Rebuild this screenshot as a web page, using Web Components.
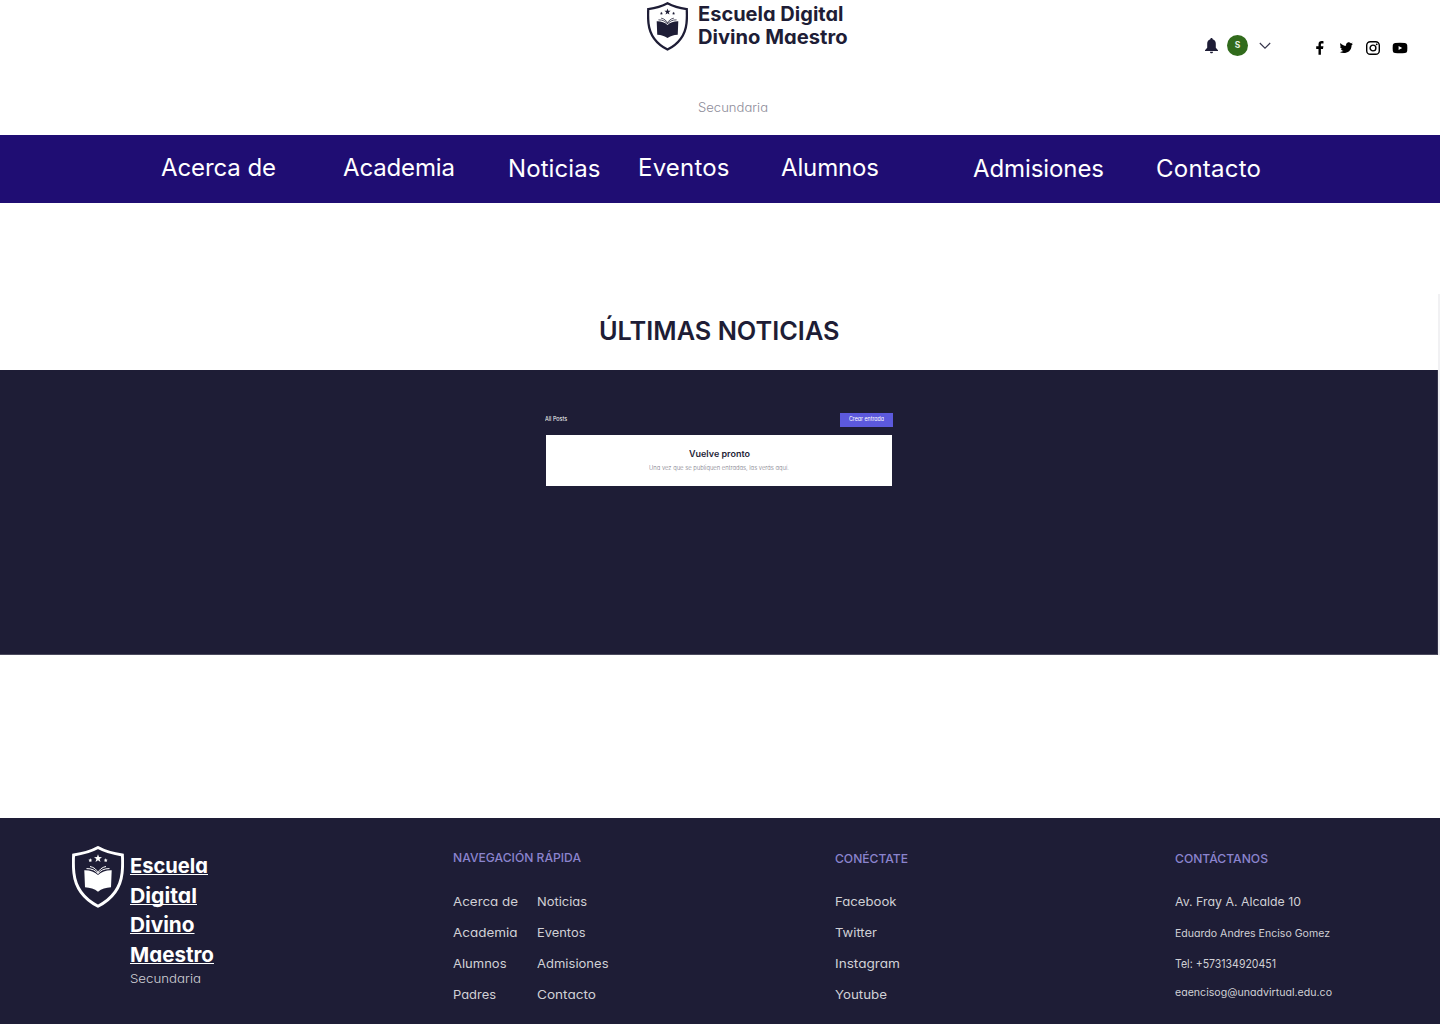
<!DOCTYPE html>
<html lang="es">
<head>
<meta charset="utf-8">
<title>Escuela Digital Divino Maestro</title>
<style>
html,body{margin:0;padding:0;background:#fff}
body{width:1440px;height:1024px;overflow:hidden;font-family:Inter,"Liberation Sans",sans-serif;font-feature-settings:"cv11";color:#1e1d36}
school-page{display:block}
</style>
</head>
<body>
<school-page></school-page>
<script>
/* One line of text that fills the width given in "w": its letters are widened,
   or, with the "track" attribute, the space between them is. */
class FitText extends HTMLElement{
  connectedCallback(){
    if(!this.shadowRoot){
      this.attachShadow({mode:'open'}).innerHTML=`<style>:host{display:block;white-space:nowrap;flex:none}span{display:inline-block;vertical-align:top;text-decoration:inherit;text-underline-offset:inherit;transform-origin:0 50%}</style><span><slot></slot></span>`;
    }
    const w=parseFloat(this.getAttribute('w'));
    const span=this.shadowRoot.querySelector('span');
    const nat=span.getBoundingClientRect().width;
    this.style.width=w+'px';
    if(this.hasAttribute('track')){
      this.style.letterSpacing=((w-nat)/(this.textContent.length-1)).toFixed(3)+'px';
    }else{
      span.style.transform='scaleX('+(w/nat).toFixed(4)+')';
    }
  }
}
class SchoolCrest extends HTMLElement{
  connectedCallback(){
    this.attachShadow({mode:'open'}).innerHTML=`<style>:host{display:block;flex:none}svg{display:block;width:100%;height:100%}</style>
<svg viewBox="0 0 52 62" preserveAspectRatio="none">
<path d="M26 1.600C19.500 5.200 10 7.900 1.600 9C1.300 15 1.200 21 1.900 27C3.400 41 12 53 26 60.200C40 53 48.600 41 50.100 27C50.800 21 50.700 15 50.400 9C42 7.900 32.500 5.200 26 1.600Z" fill="none" stroke="currentColor" stroke-width="2.900"/>
<g fill="currentColor">
<path d="M26 8.300L27 11.100L30 11.200L27.600 13L28.500 15.900L26 14.200L23.500 15.900L24.400 13L22 11.200L25 11.100Z"/>
<path d="M18.300 12.300L18.900 13.600L20.200 13.800L19.200 14.700L19.400 16L18.300 15.400L17.200 16L17.400 14.700L16.400 13.800L17.700 13.600ZM33.700 12.300L34.300 13.600L35.600 13.800L34.600 14.700L34.800 16L33.700 15.400L32.600 16L32.800 14.700L31.800 13.800L33.100 13.600Z"/>
<path d="M12.300 24.300C17.500 24.100 22.500 25.600 26 29C29.500 25.600 34.500 24.100 39.700 24.300L39 41.300C34 41.500 29.500 43 26 45.700C22.500 43 18 41.500 13 41.300Z"/>
</g>
<g fill="none" stroke="currentColor" stroke-width="1">
<path d="M14.500 22.600C19.500 22.400 24 24.500 26 27.800C28 24.500 32.500 22.400 37.500 22.600M18 20.500C22 21.200 25 23.800 26 27C27 23.800 30 21.200 34 20.500"/></g>
</svg>`;
  }
}
class HeaderTools extends HTMLElement{
  connectedCallback(){
    this.attachShadow({mode:'open'}).innerHTML=`<style>
:host{display:flex;align-items:flex-start}
svg{display:block;flex:none}
.bell{margin:18px 9px 0 0}
.av{width:21px;height:21px;border-radius:50%;background:#316b1c;color:#e8f2e2;font:700 8.500px/21px Inter,sans-serif;text-align:center;margin-top:15px}
.chev{margin:22px 41px 0 10.500px}
.soc{display:flex;gap:11px;margin-top:20px}
</style>
<svg class="bell" width="13" height="16" viewBox="0 0 13 16" fill="#1e1d36"><path d="M6.500 0C7.300 0 7.700.6 7.700 1.300C9.900 1.900 10.800 3.600 10.800 5.700V9.800L13 12.300V13.100H0V12.300L2.200 9.800V5.700C2.200 3.600 3.100 1.900 5.300 1.300C5.300.6 5.700 0 6.500 0ZM5 13.700H8C8 14.700 7.300 15.300 6.500 15.300S5 14.700 5 13.700Z"/></svg>
<div class="av">S</div>
<svg class="chev" width="12" height="8" viewBox="0 0 12 8" fill="none" stroke="#34334a" stroke-width="1.100"><path d="M.8 1L6 6.200L11.200 1"/></svg>
<div class="soc">
<svg width="16" height="16" viewBox="0 0 16 16"><path d="M6.500 14.700V8.900H4.200V6.300H6.500V4.400C6.500 2.200 7.700 1.100 9.700 1.100C10.600 1.100 11.300 1.200 11.500 1.200V3.500H10.100C9 3.500 8.900 4 8.900 4.800V6.300H11.400L11 8.900H8.900V14.700Z"/></svg>
<svg width="15" height="16" viewBox="0 0 15 16"><path d="M14 3.700C13.500 3.900 13 4.100 12.400 4.100C13 3.800 13.400 3.200 13.600 2.600C13.100 2.900 12.500 3.200 11.800 3.300C10.900 2.300 9.500 2.100 8.400 2.700C7.300 3.300 6.800 4.500 7.100 5.800C4.800 5.700 2.800 4.600 1.500 2.900C.8 4.200 1.200 5.700 2.300 6.500C1.900 6.500 1.400 6.400 1.100 6.200C1.100 7.500 2 8.600 3.200 8.900C2.900 9 2.400 9 2 8.900C2.300 10 3.300 10.800 4.500 10.800C3.500 11.600 2.200 12.100.7 11.900C4.800 14.500 12.700 12.600 12.600 5.200C13.200 4.800 13.700 4.300 14 3.700Z"/></svg>
<svg width="16" height="16" viewBox="0 0 16 16" fill="none" stroke="#000"><rect x="1.700" y="1.700" width="12.600" height="12.600" rx="3.600" stroke-width="1.400"/><circle cx="8" cy="8" r="2.900" stroke-width="1.400"/><circle cx="11.700" cy="4.300" r=".9" fill="#000" stroke="none"/></svg>
<svg width="16" height="16" viewBox="0 0 16 16"><path fill-rule="evenodd" d="M3 2.900Q8 2.400 13 2.900Q15 3.100 15.200 5Q15.500 8 15.200 11Q15 12.900 13 13.100Q8 13.600 3 13.100Q1 12.900.8 11Q.5 8 .8 5Q1 3.100 3 2.900ZM6.600 5.900V10.100L10.200 8Z"/></svg>
</div>`;
  }
}
class SiteHeader extends HTMLElement{
  connectedCallback(){
    this.attachShadow({mode:'open'}).innerHTML=`<style>
:host{display:flex;height:135px;box-sizing:border-box}
school-crest{width:41px;height:49px;margin:2px 10px 0 647px}
.id{width:507px;padding-top:3px;box-sizing:border-box}
.n{font-size:19.500px;font-weight:700;line-height:23px}
.s{font-size:12.500px;font-weight:300;line-height:20px;color:#8d8c99;margin-top:49px}
header-tools{padding-top:20px}
</style><school-crest></school-crest>
<div class="id"><fit-text class="n" w="145.5">Escuela Digital</fit-text><fit-text class="n" w="149.500">Divino Maestro</fit-text><fit-text class="s" w="70">Secundaria</fit-text></div>
<header-tools></header-tools>`;
  }
}
class NavBar extends HTMLElement{
  connectedCallback(){
    const items=[['Acerca de',161,115,0],['Academia',67,112,0],['Noticias',53,92.5,1],['Eventos',37.5,91.5,0],['Alumnos',51.5,98,0],['Admisiones',94,131,1],['Contacto',52,105,1]];
    this.attachShadow({mode:'open'}).innerHTML=`<style>
:host{display:flex;height:68px;background:#1f0d73;color:#fff;font-size:24px;font-weight:400;line-height:30px;font-feature-settings:normal;box-sizing:border-box;padding-top:18px}
</style>`+items.map(([t,g,w,d])=>`<fit-text track w="${w}" style="margin:${d}px 0 0 ${g}px">${t}</fit-text>`).join('');
  }
}
class NewsSection extends HTMLElement{
  connectedCallback(){
    this.attachShadow({mode:'open'}).innerHTML=`<style>
:host{display:block;margin-top:91px;width:1438px;height:361px;border-right:2px solid #f1f1f3}
.t{height:76px;display:flex;padding:21px 0 0 598.500px;box-sizing:border-box;font-size:26px;font-weight:600;line-height:32px}
.p{height:285px;box-sizing:border-box;background:#1e1d36;border-bottom:1px solid #4b4a5d;border-right:1px solid #34334a;padding:42.500px 544px 0 545px}
.bar{display:flex;justify-content:space-between;height:22.500px;color:#fff;font-size:5.500px}
.bar>fit-text{line-height:13px}
.b{width:53px;height:14px;line-height:13px;background:#5c59dc;display:flex;justify-content:center}
.c{height:51px;width:346px;margin-left:1px;background:#fff;display:flex;flex-direction:column;align-items:center}
.v{font-size:8.500px;font-weight:600;line-height:12px;margin-top:13px}
.u{font-size:6px;font-weight:300;line-height:8px;color:#777683;margin-top:4px}
</style>
<div class="t"><fit-text w="240.500">ÚLTIMAS NOTICIAS</fit-text></div>
<div class="p"><div class="bar"><fit-text w="22">All Posts</fit-text><div class="b"><fit-text w="35">Crear entrada</fit-text></div></div>
<div class="c"><fit-text class="v" w="61">Vuelve pronto</fit-text><fit-text class="u" w="140">Una vez que se publiquen entradas, las verás aquí.</fit-text></div></div>`;
  }
}
class SiteFooter extends HTMLElement{
  connectedCallback(){
    const col=a=>a.map(([t,w,k])=>`<fit-text class="${k||''}" w="${w}">${t}</fit-text>`).join('');
    this.attachShadow({mode:'open'}).innerHTML=`<style>
:host{display:flex;height:206px;margin-top:163px;background:#1e1d36;color:#d0d0d5;font-size:12.300px;line-height:20px;box-sizing:border-box}
school-crest{width:52px;height:62px;margin:28px 6px 0 72px;color:#fff}
.id{width:323px;padding-top:33px}
.id .n{font-size:20.500px;font-weight:700;line-height:29.500px;color:#fff;text-decoration:underline 1.300px;text-underline-offset:1px;text-decoration-skip-ink:none}
.id .s{line-height:18px;font-weight:300;margin-top:.6px}
.h{font-size:12px;font-weight:500;color:#8b84ce}
section{padding-top:31px}
.h.a{margin-top:-1px}.h.a+.cols{margin-top:24px}
.cols{display:flex;gap:19px;margin-top:22.800px}
.l{display:grid;grid-template-rows:31.300px 31px 31.200px 20px}
.q{width:382px}.r{width:340px}
.sm{font-size:10.500px}
.dn{margin-top:1px}
.up{margin-top:-2px}
</style>
<school-crest></school-crest>
<div class="id">${col([['Escuela',78,'n'],['Digital',67,'n'],['Divino',64.5,'n'],['Maestro',84,'n'],['Secundaria',71,'s']])}</div>
<section class="q"><fit-text class="h a" w="128">NAVEGACIÓN RÁPIDA</fit-text><div class="cols" style="margin-top:23.800px"><div class="l">${col([['Acerca de',65],['Academia',64.5],['Alumnos',53.5],['Padres',43]])}</div><div class="l">${col([['Noticias',50],['Eventos',48.5],['Admisiones',71.5],['Contacto',59]])}</div></div></section>
<section class="r"><fit-text class="h" w="73">CONÉCTATE</fit-text><div class="cols"><div class="l">${col([['Facebook',61.5],['Twitter',42],['Instagram',65],['Youtube',52]])}</div></div></section>
<section><fit-text class="h" w="93">CONTÁCTANOS</fit-text><div class="cols"><div class="l">${col([['Av. Fray A. Alcalde 10',126],['Eduardo Andres Enciso Gomez',155,'sm dn'],['Tel: +573134920451',101],['eaencisog@unadvirtual.edu.co',157,'sm up']])}</div></div></section>`;
  }
}
class SchoolPage extends HTMLElement{
  connectedCallback(){
    this.attachShadow({mode:'open'}).innerHTML=`<site-header></site-header><nav-bar></nav-bar><news-section></news-section><site-footer></site-footer>`;
  }
}
customElements.define('fit-text',FitText);
customElements.define('school-crest',SchoolCrest);
customElements.define('header-tools',HeaderTools);
customElements.define('site-header',SiteHeader);
customElements.define('nav-bar',NavBar);
customElements.define('news-section',NewsSection);
customElements.define('site-footer',SiteFooter);
customElements.define('school-page',SchoolPage);
</script>
</body>
</html>
